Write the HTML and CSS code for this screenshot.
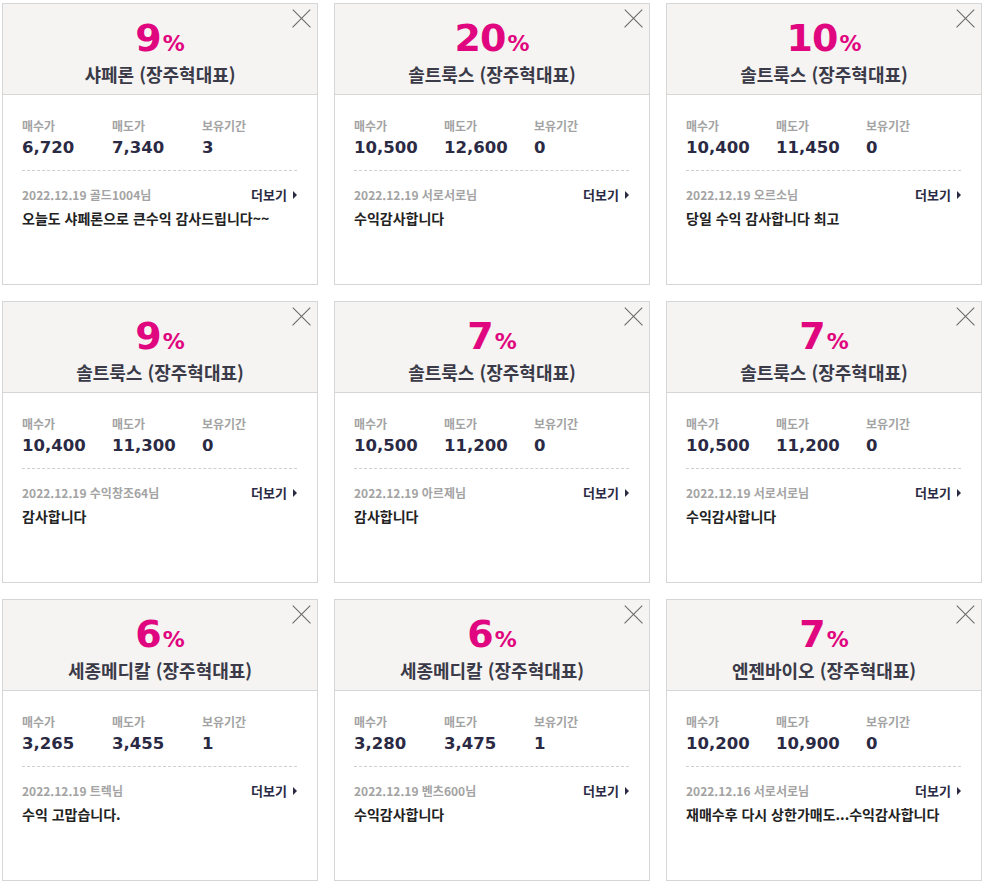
FILE: index.html
```html
<!DOCTYPE html>
<html lang="ko">
<head>
    <meta charset="UTF-8">
    <meta name="viewport" content="width=device-width, initial-scale=1.0">
    <title>수익 후기</title>
    <link rel="stylesheet" href="styles.css">
</head>
<body>
    <div class="grid">
        <div class="card">
            <div class="card-head">
                <button class="close" aria-label="닫기"></button>
                <div class="pct">9<span>%</span></div>
                <div class="name">샤페론 (장주혁대표)</div>
            </div>
            <div class="card-body">
                <div class="stats">
                    <div class="stat"><div class="label">매수가</div><div class="value">6,720</div></div>
                    <div class="stat"><div class="label">매도가</div><div class="value">7,340</div></div>
                    <div class="stat"><div class="label">보유기간</div><div class="value">3</div></div>
                </div>
                <div class="meta">
                    <span class="date">2022.12.19 골드1004님</span>
                    <a class="more" href="#">더보기</a>
                </div>
                <p class="msg">오늘도 샤페론으로 큰수익 감사드립니다~~</p>
            </div>
        </div>

        <div class="card">
            <div class="card-head">
                <button class="close" aria-label="닫기"></button>
                <div class="pct">20<span>%</span></div>
                <div class="name">솔트룩스 (장주혁대표)</div>
            </div>
            <div class="card-body">
                <div class="stats">
                    <div class="stat"><div class="label">매수가</div><div class="value">10,500</div></div>
                    <div class="stat"><div class="label">매도가</div><div class="value">12,600</div></div>
                    <div class="stat"><div class="label">보유기간</div><div class="value">0</div></div>
                </div>
                <div class="meta">
                    <span class="date">2022.12.19 서로서로님</span>
                    <a class="more" href="#">더보기</a>
                </div>
                <p class="msg">수익감사합니다</p>
            </div>
        </div>

        <div class="card">
            <div class="card-head">
                <button class="close" aria-label="닫기"></button>
                <div class="pct">10<span>%</span></div>
                <div class="name">솔트룩스 (장주혁대표)</div>
            </div>
            <div class="card-body">
                <div class="stats">
                    <div class="stat"><div class="label">매수가</div><div class="value">10,400</div></div>
                    <div class="stat"><div class="label">매도가</div><div class="value">11,450</div></div>
                    <div class="stat"><div class="label">보유기간</div><div class="value">0</div></div>
                </div>
                <div class="meta">
                    <span class="date">2022.12.19 오르소님</span>
                    <a class="more" href="#">더보기</a>
                </div>
                <p class="msg">당일 수익 감사합니다 최고</p>
            </div>
        </div>

        <div class="card">
            <div class="card-head">
                <button class="close" aria-label="닫기"></button>
                <div class="pct">9<span>%</span></div>
                <div class="name">솔트룩스 (장주혁대표)</div>
            </div>
            <div class="card-body">
                <div class="stats">
                    <div class="stat"><div class="label">매수가</div><div class="value">10,400</div></div>
                    <div class="stat"><div class="label">매도가</div><div class="value">11,300</div></div>
                    <div class="stat"><div class="label">보유기간</div><div class="value">0</div></div>
                </div>
                <div class="meta">
                    <span class="date">2022.12.19 수익창조64님</span>
                    <a class="more" href="#">더보기</a>
                </div>
                <p class="msg">감사합니다</p>
            </div>
        </div>

        <div class="card">
            <div class="card-head">
                <button class="close" aria-label="닫기"></button>
                <div class="pct">7<span>%</span></div>
                <div class="name">솔트룩스 (장주혁대표)</div>
            </div>
            <div class="card-body">
                <div class="stats">
                    <div class="stat"><div class="label">매수가</div><div class="value">10,500</div></div>
                    <div class="stat"><div class="label">매도가</div><div class="value">11,200</div></div>
                    <div class="stat"><div class="label">보유기간</div><div class="value">0</div></div>
                </div>
                <div class="meta">
                    <span class="date">2022.12.19 아르제님</span>
                    <a class="more" href="#">더보기</a>
                </div>
                <p class="msg">감사합니다</p>
            </div>
        </div>

        <div class="card">
            <div class="card-head">
                <button class="close" aria-label="닫기"></button>
                <div class="pct">7<span>%</span></div>
                <div class="name">솔트룩스 (장주혁대표)</div>
            </div>
            <div class="card-body">
                <div class="stats">
                    <div class="stat"><div class="label">매수가</div><div class="value">10,500</div></div>
                    <div class="stat"><div class="label">매도가</div><div class="value">11,200</div></div>
                    <div class="stat"><div class="label">보유기간</div><div class="value">0</div></div>
                </div>
                <div class="meta">
                    <span class="date">2022.12.19 서로서로님</span>
                    <a class="more" href="#">더보기</a>
                </div>
                <p class="msg">수익감사합니다</p>
            </div>
        </div>

        <div class="card">
            <div class="card-head">
                <button class="close" aria-label="닫기"></button>
                <div class="pct">6<span>%</span></div>
                <div class="name">세종메디칼 (장주혁대표)</div>
            </div>
            <div class="card-body">
                <div class="stats">
                    <div class="stat"><div class="label">매수가</div><div class="value">3,265</div></div>
                    <div class="stat"><div class="label">매도가</div><div class="value">3,455</div></div>
                    <div class="stat"><div class="label">보유기간</div><div class="value">1</div></div>
                </div>
                <div class="meta">
                    <span class="date">2022.12.19 트렉님</span>
                    <a class="more" href="#">더보기</a>
                </div>
                <p class="msg">수익 고맙습니다.</p>
            </div>
        </div>

        <div class="card">
            <div class="card-head">
                <button class="close" aria-label="닫기"></button>
                <div class="pct">6<span>%</span></div>
                <div class="name">세종메디칼 (장주혁대표)</div>
            </div>
            <div class="card-body">
                <div class="stats">
                    <div class="stat"><div class="label">매수가</div><div class="value">3,280</div></div>
                    <div class="stat"><div class="label">매도가</div><div class="value">3,475</div></div>
                    <div class="stat"><div class="label">보유기간</div><div class="value">1</div></div>
                </div>
                <div class="meta">
                    <span class="date">2022.12.19 벤츠600님</span>
                    <a class="more" href="#">더보기</a>
                </div>
                <p class="msg">수익감사합니다</p>
            </div>
        </div>

        <div class="card">
            <div class="card-head">
                <button class="close" aria-label="닫기"></button>
                <div class="pct">7<span>%</span></div>
                <div class="name">엔젠바이오 (장주혁대표)</div>
            </div>
            <div class="card-body">
                <div class="stats">
                    <div class="stat"><div class="label">매수가</div><div class="value">10,200</div></div>
                    <div class="stat"><div class="label">매도가</div><div class="value">10,900</div></div>
                    <div class="stat"><div class="label">보유기간</div><div class="value">0</div></div>
                </div>
                <div class="meta">
                    <span class="date">2022.12.16 서로서로님</span>
                    <a class="more" href="#">더보기</a>
                </div>
                <p class="msg">재매수후 다시 상한가매도...수익감사합니다</p>
            </div>
        </div>
    </div>
</body>
</html>
```

FILE: styles.css
```css
body {
    margin: 0;
    background-color: #fff;
    font-family: "Noto Sans CJK KR", "Noto Sans", sans-serif;
    color: #222;
}
.grid {
    display: grid;
    grid-template-columns: repeat(3, 316px);
    gap: 16px;
    padding: 3px 2px;
}
.card {
    height: 282px;
    box-sizing: border-box;
    border: 1px solid #d6d6d6;
    background-color: #fff;
}
.card-head {
    position: relative;
    height: 91px;
    box-sizing: border-box;
    padding-top: 14px;
    background-color: #f5f4f2;
    border-bottom: 1px solid #d6d6d6;
    text-align: center;
}
.close {
    position: absolute;
    top: 5px;
    right: 6px;
    width: 20px;
    height: 20px;
    padding: 0;
    border: none;
    background: none;
    cursor: pointer;
}
.close::before,
.close::after {
    content: "";
    position: absolute;
    left: -2px;
    top: 9px;
    width: 25px;
    height: 1.4px;
    background-color: #666;
    transform: rotate(45deg);
}
.close::after {
    transform: rotate(-45deg);
}
.pct {
    font-family: "DejaVu Sans", sans-serif;
    font-weight: bold;
    font-size: 38px;
    line-height: 40px;
    color: #e0067f;
    letter-spacing: -1px;
}
.pct span {
    font-size: 22px;
    margin-left: 2px;
    letter-spacing: 0;
}
.name {
    margin-top: -2px;
    font-size: 18px;
    font-weight: bold;
    line-height: 24px;
    color: #3a3a48;
}
.card-body {
    padding: 23px 20px 0 19px;
}
.stats {
    display: flex;
    padding-bottom: 11px;
    border-bottom: 1px dashed #cfcfcf;
}
.stat {
    width: 90px;
}
.label {
    font-size: 12px;
    font-weight: bold;
    line-height: 16px;
    color: #a3a3a3;
}
.value {
    margin-top: 3px;
    font-family: "DejaVu Sans", sans-serif;
    font-weight: bold;
    font-size: 16.5px;
    line-height: 22px;
    color: #2b2a44;
}
.meta {
    display: flex;
    justify-content: space-between;
    align-items: center;
    margin-top: 15px;
    line-height: 18px;
}
.date {
    font-size: 12px;
    font-weight: bold;
    color: #a3a3a3;
}
.more {
    font-size: 13px;
    font-weight: bold;
    color: #2b2a44;
    text-decoration: none;
}
.more::after {
    content: "";
    display: inline-block;
    margin-left: 6px;
    vertical-align: 1px;
    border-left: 4px solid #2b2a44;
    border-top: 4px solid transparent;
    border-bottom: 4px solid transparent;
}
.msg {
    margin: 5px 0 0;
    font-size: 14px;
    font-weight: bold;
    line-height: 18px;
    color: #222;
}
```
